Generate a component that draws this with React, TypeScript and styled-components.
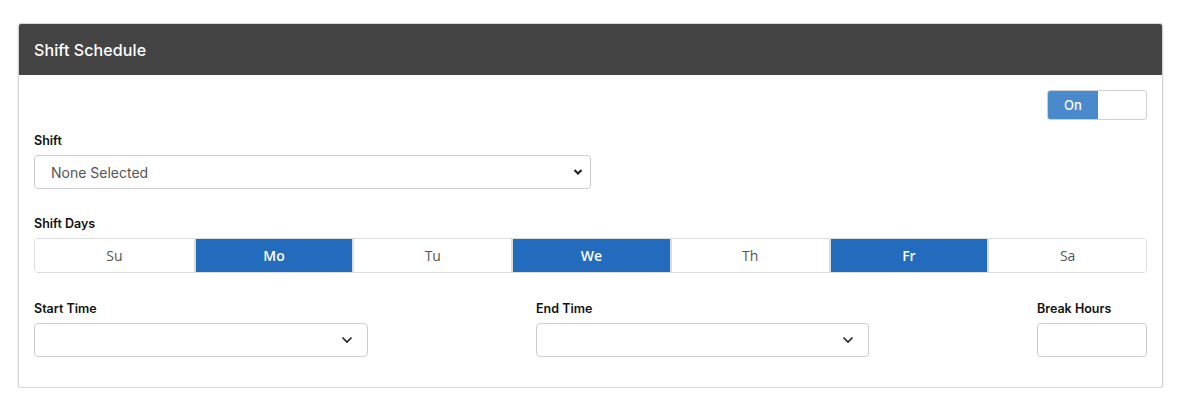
import React, { useState } from "react";
import styled, { createGlobalStyle } from "styled-components";

const GlobalStyle = createGlobalStyle`
  body {
    margin: 0;
    background: #ffffff;
    font-family: Inter, "Noto Sans", sans-serif;
  }
`;

const Page = styled.div`
  padding: 23px 22px 0 18px;
`;

const Card = styled.section`
  border: 1px solid #d4d4d4;
  border-radius: 3px;
  box-shadow: 0 1px 2px rgba(0, 0, 0, 0.2);
  overflow: hidden;
`;

const Header = styled.header`
  background: #444444;
  height: 51px;
  display: flex;
  align-items: center;
  padding: 0 15px;
  color: #ffffff;
  font-size: 16px;
  font-weight: 500;
  letter-spacing: 0.1px;
`;

const Body = styled.div`
  padding: 15px 15px 30px 15px;
  display: flex;
  flex-direction: column;
`;

const ToggleRow = styled.div`
  display: flex;
  justify-content: flex-end;
`;

const Toggle = styled.button`
  width: 100px;
  height: 30px;
  padding: 0;
  border: 1px solid #cfcfcf;
  border-radius: 3px;
  background: #ffffff;
  display: flex;
  overflow: hidden;
  cursor: pointer;
`;

const ToggleOn = styled.span<{ $active: boolean }>`
  width: 50px;
  height: 100%;
  display: flex;
  align-items: center;
  justify-content: center;
  background: ${(p) => (p.$active ? "#4a89cc" : "#ffffff")};
  color: ${(p) => (p.$active ? "#ffffff" : "#444")};
  font-family: Inter, sans-serif;
  font-size: 13px;
  font-weight: 500;
`;

const Label = styled.label`
  display: block;
  font-size: 12.5px;
  font-weight: 600;
  color: #111;
  margin-bottom: 7px;
`;

const Field = styled.div<{ $width?: string; $top?: number }>`
  width: ${(p) => p.$width ?? "auto"};
  margin-top: ${(p) => p.$top ?? 0}px;
`;

const SelectWrap = styled.div`
  position: relative;
  width: 100%;
  height: 34px;
`;

const Select = styled.select`
  appearance: none;
  width: 100%;
  height: 100%;
  box-sizing: border-box;
  border: 1px solid #cccccc;
  border-radius: 4px;
  background: #ffffff;
  padding: 0 16px;
  font-family: Inter, sans-serif;
  font-size: 14px;
  color: #555555;
`;

const Chevron = styled.svg`
  position: absolute;
  top: 50%;
  transform: translateY(-50%);
  pointer-events: none;
`;

const Input = styled.input`
  width: 100%;
  height: 34px;
  box-sizing: border-box;
  border: 1px solid #cccccc;
  border-radius: 4px;
  background: #ffffff;
  font-family: Inter, sans-serif;
  font-size: 14px;
`;

const Days = styled.div`
  display: grid;
  grid-template-columns: repeat(7, 1fr);
  border: 1px solid #dcdcdc;
  border-radius: 4px;
  overflow: hidden;
  height: 35px;
  box-sizing: border-box;
`;

const Day = styled.button<{ $on: boolean }>`
  border: none;
  border-left: 2px solid #dcdcdc;
  &:first-child {
    border-left: none;
  }
  background: ${(p) => (p.$on ? "#236bbc" : "#ffffff")};
  color: ${(p) => (p.$on ? "#ffffff" : "#555555")};
  font-family: "Open Sans", sans-serif;
  font-size: 14px;
  font-weight: ${(p) => (p.$on ? 600 : 400)};
  cursor: pointer;
  padding: 0;
`;

const TimeRow = styled.div`
  display: flex;
  justify-content: space-between;
  margin-top: 28px;
`;

const BoldChevron = () => (
  <Chevron width="10" height="8" viewBox="0 0 10 8" style={{ right: 8 }}>
    <path d="M1.5 2l3.5 3.5L8.5 2" fill="none" stroke="#222" strokeWidth="2.2" />
  </Chevron>
);

const ThinChevron = () => (
  <Chevron width="12" height="8" viewBox="0 0 12 8" style={{ right: 15 }}>
    <path d="M1.5 1.5l4.5 4.5 4.5-4.5" fill="none" stroke="#222" strokeWidth="1.6" />
  </Chevron>
);

const dayNames = ["Su", "Mo", "Tu", "We", "Th", "Fr", "Sa"];

export default function App() {
  const [on, setOn] = useState(true);
  const [days, setDays] = useState<boolean[]>([false, true, false, true, false, true, false]);

  const flip = (i: number) => setDays(days.map((d, j) => (j === i ? !d : d)));

  return (
    <Page>
      <GlobalStyle />
      <Card>
        <Header>Shift Schedule</Header>
        <Body>
          <ToggleRow>
            <Toggle onClick={() => setOn(!on)}>
              <ToggleOn $active={on}>On</ToggleOn>
            </Toggle>
          </ToggleRow>

          <Field $width="557px" $top={13}>
            <Label>Shift</Label>
            <SelectWrap>
              <Select defaultValue="">
                <option value="">None Selected</option>
              </Select>
              <BoldChevron />
            </SelectWrap>
          </Field>

          <Field $top={27}>
            <Label>Shift Days</Label>
            <Days>
              {dayNames.map((d, i) => (
                <Day key={d} $on={days[i]} onClick={() => flip(i)}>
                  {d}
                </Day>
              ))}
            </Days>
          </Field>

          <TimeRow>
            <Field $width="334px">
              <Label>Start Time</Label>
              <SelectWrap>
                <Select defaultValue="">
                  <option value=""></option>
                </Select>
                <ThinChevron />
              </SelectWrap>
            </Field>
            <Field $width="333px">
              <Label>End Time</Label>
              <SelectWrap>
                <Select defaultValue="">
                  <option value=""></option>
                </Select>
                <ThinChevron />
              </SelectWrap>
            </Field>
            <Field $width="110px">
              <Label>Break Hours</Label>
              <Input type="text" />
            </Field>
          </TimeRow>
        </Body>
      </Card>
    </Page>
  );
}
